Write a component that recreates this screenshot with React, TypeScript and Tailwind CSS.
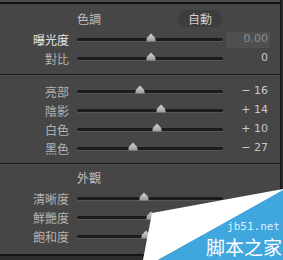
import React from "react";

// Lightroom-style basic panel: tone + presence sliders.
type Row = { label: string; pos: number; value?: string; active?: boolean; boxed?: boolean };

const tone: Row[] = [
  { label: "曝光度", pos: 74, value: "0.00", active: true, boxed: true },
  { label: "對比", pos: 74, value: "0" },
];

const toneRegions: Row[] = [
  { label: "亮部", pos: 63, value: "− 16" },
  { label: "陰影", pos: 84, value: "+ 14" },
  { label: "白色", pos: 80, value: "+ 10" },
  { label: "黑色", pos: 56, value: "− 27" },
];

const presence: Row[] = [
  { label: "清晰度", pos: 67 },
  { label: "鮮艷度", pos: 74 },
  { label: "飽和度", pos: 69 },
];

const cjk = { fontFamily: '"Noto Sans CJK TC", "Noto Sans", sans-serif' };
const num = { fontFamily: '"DejaVu Sans", "Liberation Sans", sans-serif' };

const Thumb: React.FC<{ left: number }> = ({ left }) => (
  <svg
    width="10"
    height="9"
    viewBox="0 0 10 9"
    className="absolute top-[-5px]"
    style={{ left: left - 5 }}
  >
    <defs>
      <linearGradient id="tg" x1="0" y1="0" x2="0" y2="1">
        <stop offset="0" stopColor="#d6d6d6" />
        <stop offset="1" stopColor="#9a9a9a" />
      </linearGradient>
    </defs>
    <path d="M0.5 8.5 V6.3 Q0.5 4.6 2.2 3.6 L5 0.5 L7.8 3.6 Q9.5 4.6 9.5 6.3 V8.5 Z" fill="url(#tg)" />
  </svg>
);

const Slider: React.FC<{ row: Row }> = ({ row }) => (
  <div className="flex items-center h-[19px]">
    <div
      className={`w-[69px] text-right text-[12px] leading-none ${row.active ? "text-[#e8e8e8]" : "text-[#b3b3b3]"}`}
      style={cjk}
    >
      {row.label}
    </div>
    <div className="relative ml-[8px] w-[146px] h-[3px] rounded-full bg-[#1c1c1c] shadow-[0_1px_0_#575757]">
      <Thumb left={row.pos} />
    </div>
    {row.value !== undefined && (
      <div
        className={`ml-[3px] w-[44px] h-[16px] flex items-center justify-end pr-[2px] text-[11px] ${
          row.boxed ? "bg-[#4f4f4f] text-[#8e8e8e]" : "text-[#c9c9c9]"
        }`}
        style={num}
      >
        {row.value}
      </div>
    )}
  </div>
);

const Header: React.FC<{ title: string; auto?: boolean }> = ({ title, auto }) => (
  <div className="flex items-center h-[19px]">
    <div className="ml-[77px] text-[12px] leading-none text-[#bdbdbd]" style={cjk}>
      {title}
    </div>
    {auto && (
      <div
        className="ml-[77px] h-[17px] px-[10px] flex items-center rounded-full bg-[#3d3d3d] text-[12px] text-[#d0d0d0]"
        style={cjk}
      >
        自動
      </div>
    )}
  </div>
);

const Divider = () => (
  <div className="h-[2px] border-t border-[#1d1d1d] border-b border-b-[#505050]" />
);

export default function App() {
  return (
    <div className="relative w-[283px] h-[260px] overflow-hidden bg-[#464646]">
      <div className="flex flex-col mr-[3px] h-full">
        <div className="h-[2px] bg-[#4a4a4a]" />
        <div className="h-[2px] bg-[#111111]" />
        <div className="flex flex-col pt-[5px] pb-[6px]">
          <Header title="色調" auto />
          <div className="mt-[2px]" />
          {tone.map((r) => (
            <Slider key={r.label} row={r} />
          ))}
        </div>
        <Divider />
        <div className="flex flex-col pt-[6px] pb-[5px]">
          {toneRegions.map((r) => (
            <Slider key={r.label} row={r} />
          ))}
        </div>
        <Divider />
        <div className="flex flex-col pt-[3px]">
          <Header title="外觀" />
          <div className="mt-[2px]" />
          {presence.map((r) => (
            <Slider key={r.label} row={r} />
          ))}
        </div>
        <div className="mt-auto h-[2px] bg-[#151515]" />
        <div className="h-[4px] bg-[#2c2c2c]" />
      </div>
      <div className="absolute top-0 right-0 w-[3px] h-full bg-[#2a2a2a] border-l border-[#151515]" />

      {/* watermark overlay */}
      <svg className="absolute left-0 top-0" width="283" height="260" viewBox="0 0 283 260">
        <polygon points="152,213 283,189 283,191 158,260 143,260" fill="#ffffff" />
        <polygon points="283,190 283,260 158,260" fill="#3fa6de" />
      </svg>
      <div
        className="absolute right-[3px] top-[221px] text-[11px] leading-[11px] text-[#d8f0ff]"
        style={{ fontFamily: '"DejaVu Sans Mono", monospace' }}
      >
        jb51.net
      </div>
      <div className="absolute right-[1px] top-[237px] text-[19px] leading-[19px] text-white" style={cjk}>
        脚本之家
      </div>
    </div>
  );
}
